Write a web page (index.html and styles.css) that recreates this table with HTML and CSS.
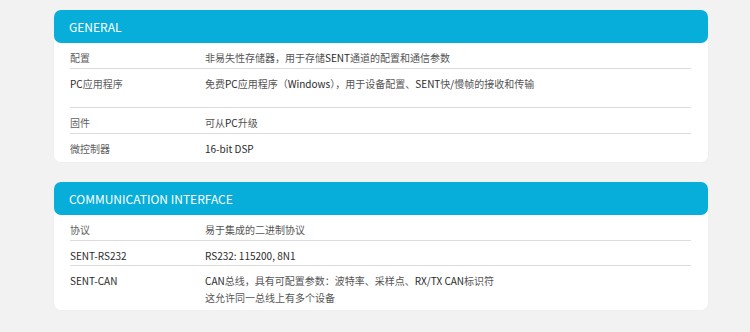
FILE: index.html
```html
<!DOCTYPE html>
<html lang="zh">
<head>
<meta charset="utf-8">
<link rel="stylesheet" href="styles.css">
</head>
<body>
<div class="page">
  <section class="card">
    <div class="card-head">GENERAL</div>
    <div class="rows">
      <div class="row"><div class="label">配置</div><div class="value">非易失性存储器，用于存储<b>SENT</b>通道的配置和通信参数</div></div>
      <div class="row row-tall"><div class="label"><b>PC</b>应用程序</div><div class="value">免费<b>PC</b>应用程序（<b>Windows</b>），用于设备配置、<b>SENT</b>快<b>/</b>慢帧的接收和传输</div></div>
      <div class="row"><div class="label">固件</div><div class="value">可从<b>PC</b>升级</div></div>
      <div class="row row-last"><div class="label">微控制器</div><div class="value"><b>16-bit DSP</b></div></div>
    </div>
  </section>
  <section class="card">
    <div class="card-head">COMMUNICATION INTERFACE</div>
    <div class="rows">
      <div class="row"><div class="label">协议</div><div class="value">易于集成的二进制协议</div></div>
      <div class="row row-short"><div class="label"><b>SENT-RS232</b></div><div class="value"><b>RS232: 115200, 8N1</b></div></div>
      <div class="row row-last row-end"><div class="label"><b>SENT-CAN</b></div><div class="value"><b>CAN</b>总线，具有可配置参数：波特率、采样点、<b>RX/TX CAN</b>标识符<br>这允许同一总线上有多个设备</div></div>
    </div>
  </section>
</div>
</body>
</html>
```
FILE: styles.css
```css
html, body {
  margin: 0;
  padding: 0;
  background: #f2f2f2;
}
body {
  width: 750px;
  height: 332px;
  overflow: hidden;
  font-family: "Noto Sans CJK SC", "Noto Sans", sans-serif;
  font-size: 10px;
  color: #555;
}
.page {
  display: flex;
  flex-direction: column;
  gap: 20px;
  padding: 10px 42px 0 54px;
}
.card {
  background: #fff;
  border-radius: 7px;
  box-shadow: 0 0 2px rgba(0,0,0,0.04);
}
.card-head {
  background: #07aed9;
  color: #fff;
  border-radius: 7px;
  height: 33px;
  line-height: 33px;
  padding-left: 15px;
  font-size: 12px;
}
.rows {
  padding: 0 17px 0 16px;
}
.row {
  display: flex;
  border-bottom: 1px solid #dcdcdc;
  padding: 6px 0 2px;
  line-height: 17px;
  min-height: 17px;
}
.row-tall {
  min-height: 30px;
}
.row-short {
  padding-bottom: 1px;
}
.row-last {
  border-bottom: none;
  padding-bottom: 5px;
}
.row-end {
  padding-bottom: 4px;
}
.label {
  width: 135px;
  flex: none;
  color: #606060;
}
.value {
  color: #555;
}
b {
  font-weight: normal;
  color: #2a2a2a;
}
```
